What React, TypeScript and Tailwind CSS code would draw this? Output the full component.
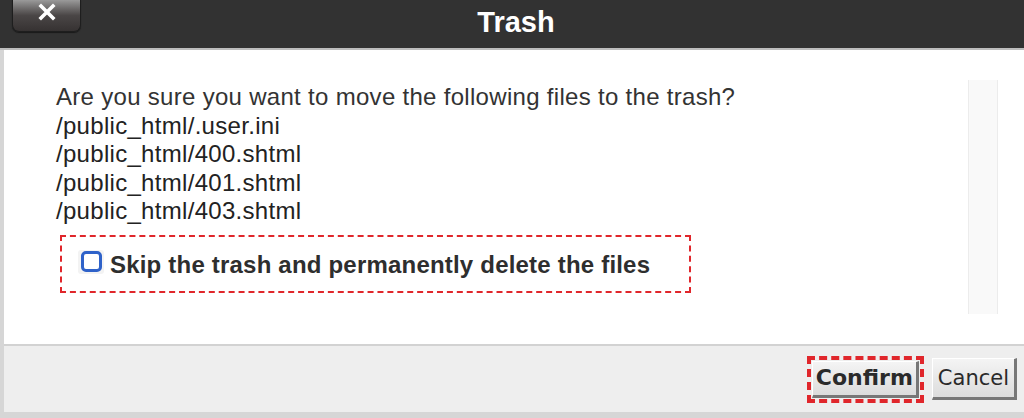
export default function App() {
  const files = [
    "/public_html/.user.ini",
    "/public_html/400.shtml",
    "/public_html/401.shtml",
    "/public_html/403.shtml",
  ];

  return (
    <div className="w-[1024px] h-[418px] overflow-hidden flex flex-col bg-[#d6d6d6] font-['Liberation_Sans',Arial,sans-serif]">
      {/* title bar */}
      <div className="relative h-[50px] shrink-0 bg-[#323232] border-b-2 border-[#bdbdbd] flex items-center justify-center">
        <button className="absolute left-[12px] top-0 w-[69px] h-[32px] rounded-b-[7px] bg-gradient-to-b from-[#9a9a9a] via-[#4a4646] to-[#363232] border border-t-0 border-[#1e1e1e] shadow-[0_1px_1px_rgba(0,0,0,0.5)] flex items-start justify-center pt-[3px]">
          <svg width="18" height="18" viewBox="0 0 18 18">
            <path d="M3 3 L15 15 M15 3 L3 15" stroke="#fff" strokeWidth="3.6" strokeLinecap="square" />
          </svg>
        </button>
        <h1 className="text-white font-bold text-[29px] leading-none mt-[-4px] ml-[8px]">Trash</h1>
      </div>

      {/* body */}
      <div className="flex-1 ml-[4px] bg-white flex">
        <div className="flex-1 pl-[52px] pt-[33px] text-[24px] tracking-[0.3px] leading-[28.6px] text-[#222]">
          <p className="text-[#333]">Are you sure you want to move the following files to the trash?</p>
          {files.map((f) => (
            <p key={f}>{f}</p>
          ))}
          <div className="mt-[9px] ml-[4px] w-[631px] h-[58px] border-2 border-dashed border-[#e0262b] flex items-center pl-[16px] pt-[3px]">
            <label className="flex items-center gap-[6px] text-[#2e2e2e] font-bold text-[24px] tracking-[0.2px]">
              <span className="w-[26px] h-[24px] flex items-center justify-center rounded-[3px] bg-[#f3f3f3] mt-[-7px]">
                <span className="w-[21px] h-[21px] rounded-[5px] border-[3px] border-[#2f62c9] bg-white" />
              </span>
              Skip the trash and permanently delete the files
            </label>
          </div>
        </div>
        <div className="w-[30px] mr-[26px] mt-[30px] mb-[30px] bg-[#f9f9f9] border-x border-[#ececec]" />
      </div>

      {/* footer */}
      <div className="h-[68px] shrink-0 ml-[4px] mb-[6px] bg-[#eeeeee] border-t-2 border-[#d2d2d2] flex items-center justify-end gap-[8px] pr-[7px] font-['DejaVu_Sans',Verdana,sans-serif]">
        <div className="border-4 border-dashed border-[#e0262b] p-[1px]">
          <button className="h-[37px] px-[3px] bg-gradient-to-b from-[#f4f4f4] to-[#dcdcdc] border border-[#ffffff] border-r-[3px] border-b-[3px] border-r-[#777] border-b-[#777] text-[22px] font-bold text-[#2a2a2a] leading-none">
            Confirm
          </button>
        </div>
        <button className="h-[42px] px-[5px] bg-gradient-to-b from-[#f4f4f4] to-[#dcdcdc] border border-[#ffffff] border-r-[3px] border-b-[3px] border-r-[#777] border-b-[#777] text-[21px] text-[#2a2a2a] leading-none">
          Cancel
        </button>
      </div>
    </div>
  );
}
